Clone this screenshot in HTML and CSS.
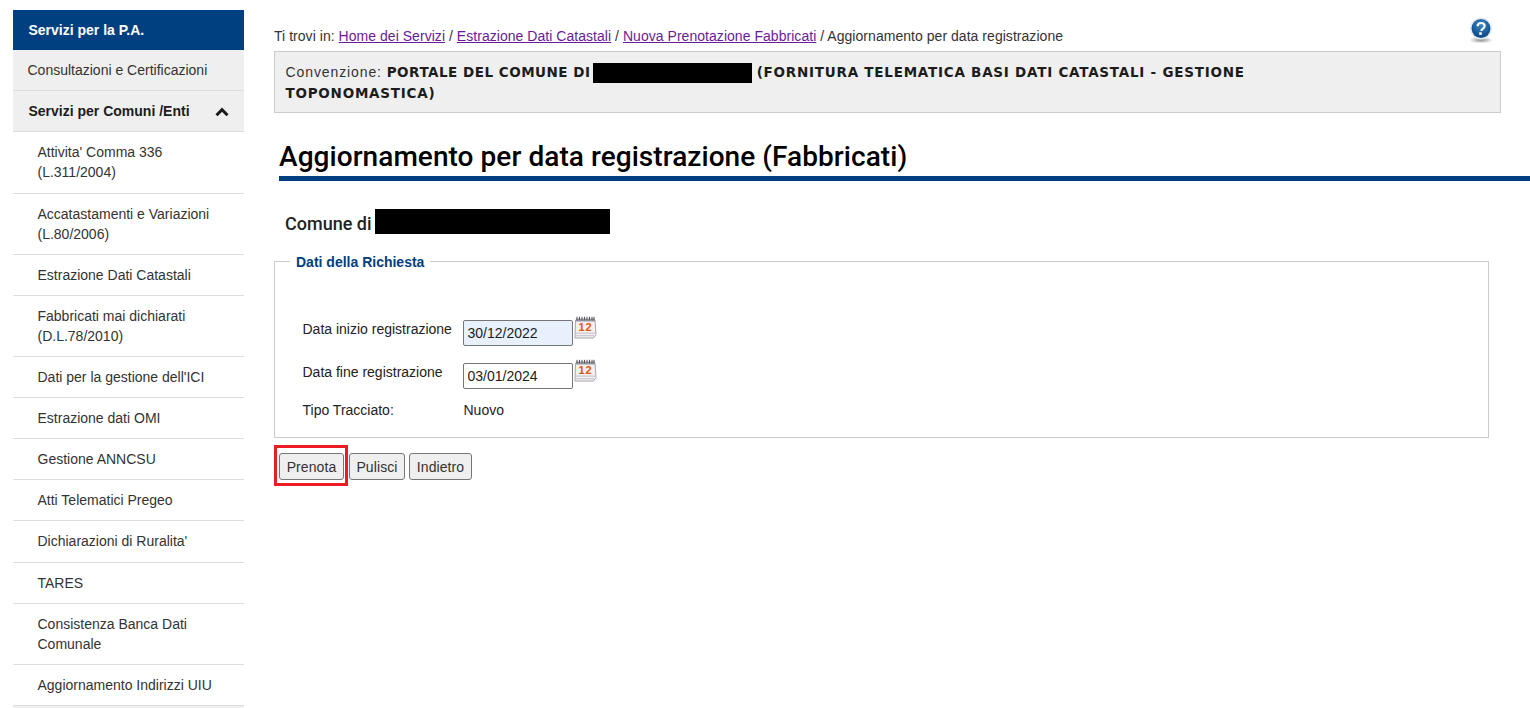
FILE: index.html
```html
<!DOCTYPE html>
<html lang="it">
<head>
<meta charset="utf-8">
<title>Aggiornamento per data registrazione</title>
<link rel="stylesheet" href="styles.css">
</head>
<body>
<div class="page">
  <nav class="sidebar">
    <div class="side-head">Servizi per la P.A.</div>
    <a class="side-top">Consultazioni e Certificazioni</a>
    <div class="side-group"><span>Servizi per Comuni /Enti</span>
      <svg class="chev" width="14" height="10" viewBox="0 0 14 10"><path d="M1.5 8.2 7 2.6l5.5 5.6" fill="none" stroke="#1c1c1c" stroke-width="3"/></svg>
    </div>
    <ul class="side-list">
      <li>Attivita' Comma 336 (L.311/2004)</li>
      <li>Accatastamenti e Variazioni (L.80/2006)</li>
      <li>Estrazione Dati Catastali</li>
      <li>Fabbricati mai dichiarati (D.L.78/2010)</li>
      <li>Dati per la gestione dell'ICI</li>
      <li>Estrazione dati OMI</li>
      <li>Gestione ANNCSU</li>
      <li>Atti Telematici Pregeo</li>
      <li>Dichiarazioni di Ruralita'</li>
      <li>TARES</li>
      <li>Consistenza Banca Dati Comunale</li>
      <li>Aggiornamento Indirizzi UIU</li>
    </ul>
    <div class="side-foot"></div>
  </nav>
  <main class="content">
    <div class="crumb-row">
      <p class="crumbs">Ti trovi in: <a href="#">Home dei Servizi</a> / <a href="#">Estrazione Dati Catastali</a> / <a href="#">Nuova Prenotazione Fabbricati</a> / Aggiornamento per data registrazione</p>
      <svg class="help" width="26" height="28" viewBox="0 0 26 28">
        <defs>
          <radialGradient id="hb" cx="50%" cy="30%" r="70%"><stop offset="0" stop-color="#3a86c6"/><stop offset="1" stop-color="#0b4685"/></radialGradient>
          <radialGradient id="hs" cx="50%" cy="50%" r="50%"><stop offset="0" stop-color="#8f8f8f"/><stop offset="1" stop-color="#fff"/></radialGradient>
        </defs>
        <ellipse cx="13" cy="24" rx="12" ry="3.5" fill="url(#hs)"/>
        <circle cx="13" cy="12.5" r="11" fill="#dfe9f2"/>
        <circle cx="13" cy="12.5" r="9.4" fill="url(#hb)"/>
        <path d="M9.6 10.2c0-2 1.5-3.2 3.5-3.2s3.5 1.2 3.5 3c0 1.500-.9 2.200-1.900 2.900-.9.6-1.300 1.100-1.300 2.100" fill="none" stroke="#fff" stroke-width="2.200"/>
        <rect x="11.200" y="16.300" width="2.600" height="2.500" fill="#fff"/>
      </svg>
    </div>
    <div class="convention">
      <span class="conv-label">Convenzione:</span>
      <strong>PORTALE DEL COMUNE DI<span class="redact redact-a"></span> <span class="conv-rest">(FORNITURA TELEMATICA BASI DATI CATASTALI - GESTIONE TOPONOMASTICA)</span></strong>
    </div>
    <h1 class="title">Aggiornamento per data registrazione (Fabbricati)</h1>
    <h2 class="comune"><span class="comune-text">Comune di</span><span class="redact redact-b"></span></h2>
    <fieldset class="request">
      <legend>Dati della Richiesta</legend>
      <div class="form-grid">
        <label class="lab" for="d1">Data inizio registrazione</label>
        <div class="field field-first">
          <input id="d1" class="date filled" type="text" value="30/12/2022">
          <svg class="cal" width="24" height="24" viewBox="0 0 24 24">
            <path d="M2.500 4h19.500L23 18.500 20.500 22H2Z" fill="#f3f0ee" stroke="#a8a5b0"/>
            <path d="M3 16.500h19v1.300H3zM3 19h18v1.300H3z" fill="#cdc9d6"/>
            <path d="M3 2.500h18.500l.5 3H3Z" fill="#9a9aa2"/>
            <path d="M4 .8v3.500M6.500.8v3.500M9 .8v3.500M11.500.8v3.500M14 .8v3.500M16.500.8v3.500M19 .8v3.500M21 .8v3.500" stroke="#55565c"/>
            <text x="12.500" y="15" class="cal-num">12</text>
          </svg>
        </div>
        <label class="lab" for="d2">Data fine registrazione</label>
        <div class="field">
          <input id="d2" class="date" type="text" value="03/01/2024">
          <svg class="cal" width="24" height="24" viewBox="0 0 24 24">
            <path d="M2.500 4h19.500L23 18.500 20.500 22H2Z" fill="#f3f0ee" stroke="#a8a5b0"/>
            <path d="M3 16.500h19v1.300H3zM3 19h18v1.300H3z" fill="#cdc9d6"/>
            <path d="M3 2.500h18.500l.5 3H3Z" fill="#9a9aa2"/>
            <path d="M4 .8v3.500M6.500.8v3.500M9 .8v3.500M11.500.8v3.500M14 .8v3.500M16.500.8v3.500M19 .8v3.500M21 .8v3.500" stroke="#55565c"/>
            <text x="12.500" y="15" class="cal-num">12</text>
          </svg>
        </div>
        <span class="lab plain">Tipo Tracciato:</span>
        <span class="plain value">Nuovo</span>
      </div>
    </fieldset>
    <div class="actions">
      <span class="highlight"><button class="btn btn-prenota" type="button">Prenota</button></span>
      <button class="btn btn-pulisci" type="button">Pulisci</button>
      <button class="btn btn-indietro" type="button">Indietro</button>
    </div>
  </main>
</div>
</body>
</html>
```
FILE: styles.css
```css
html, body { margin: 0; padding: 0; height: 708px; overflow: hidden; background: #fff; }
body { font-family: "Liberation Sans", Arial, sans-serif; font-size: 14px; color: #1c1c1c; }
.page { display: flex; align-items: flex-start; padding: 10px 0 0 13px; }
.sidebar { width: 231px; flex: none; }
.side-head { height: 40px; line-height: 40px; background: #004080; color: #fff; font-weight: 700; padding-left: 15.5px; }
.side-top { display: block; height: 40px; line-height: 40px; background: #efefef; border-bottom: 1px solid #ddd; padding-left: 14.5px; color: #333; }
.side-group { display: flex; justify-content: space-between; align-items: center; height: 40px; background: #efefef; border-bottom: 1px solid #ddd; padding: 0 15px 0 15.5px; font-weight: 700; }
.chev { margin-top: 2px; }
.side-list { list-style: none; margin: 0; padding: 0.4px 0 0; }
.side-list li { padding: 10.07px 25px 10.07px 24.5px; line-height: 20px; border-bottom: 1px solid #ddd; color: #333; }
.side-foot { height: 3px; background: #efefef; }
.content { flex: 1; min-width: 0; margin-left: 30px; }
.crumb-row { display: flex; align-items: flex-start; justify-content: space-between; height: 41px; }
.crumbs { margin: 0; padding-top: 18px; line-height: 16px; color: #333; letter-spacing: 0.04px; }
.crumbs a { color: #6a1b9a; }
.help { margin: 6px 36px 0 0; }
.convention { box-sizing: border-box; width: 1227px; height: 62px; padding: 10px 200px 8px 10.5px; background: #efefef; border: 1px solid #ccc; line-height: 20px; font-size: 14px; letter-spacing: 0.9px; color: #333; }
.convention strong { font-family: "DejaVu Sans", Verdana, sans-serif; font-size: 13.5px; letter-spacing: 0.5px; color: #1c1c1c; }
.conv-rest { letter-spacing: 0.76px; }
.redact { display: inline-block; background: #000; vertical-align: middle; }
.redact-a { width: 159px; height: 20px; margin: 0 -1px 0 3px; }
.redact-b { width: 235px; height: 25px; margin-left: 3px; }
.title { margin: 26px 0 0 5px; padding-bottom: 1px; border-bottom: 5px solid #004080; font-family: Roboto, sans-serif; font-size: 28px; line-height: 36px; font-weight: 500; letter-spacing: 0.06px; color: #000; white-space: nowrap; }
.comune { display: flex; margin: 28px 0 0 11px; height: 25px; font-family: Roboto, sans-serif; font-size: 18px; line-height: 25px; font-weight: 500; color: #222; }
.comune-text { padding-top: 2px; }
.request { width: 1215px; box-sizing: border-box; height: 186px; margin: 18px 0 0; padding: 0; border: 1px solid #ccc; }
.request legend { margin-left: 15px; padding: 2px 6px 0; font-weight: 700; color: #004080; line-height: 16px; }
.form-grid { display: grid; grid-template-columns: 160px auto; justify-content: start; padding: 49px 0 0 27.5px; row-gap: 11px; align-items: start; }
.lab { padding-top: 2px; color: #222; }
.field { display: flex; align-items: flex-start; }
.field-first { padding-bottom: 5px; }
.date { box-sizing: border-box; width: 110px; height: 26px; margin-top: 1px; padding: 1px 4px; border: 1px solid #767676; border-radius: 2px; background: #fff; font: 14px "Liberation Sans", Arial, sans-serif; color: #1c1c1c; }
.date.filled { background: #e8f0fe; }
.cal { margin-top: -3px; }
.cal-num { font: 700 11px "Liberation Sans", Arial, sans-serif; letter-spacing: 1px; fill: #e2570f; text-anchor: middle; }
.plain { margin-top: 2px; color: #222; }
.lab.plain { padding-top: 0; }
.value { padding-left: 1px; }
.actions { display: flex; align-items: center; gap: 4px; margin-top: 15px; padding-left: 5px; }
.highlight { display: flex; position: relative; margin-right: 1px; }
.highlight::after { content: ""; position: absolute; inset: -8px -4px -6px -5px; border: 3px solid #ed1c24; }
.btn { box-sizing: border-box; height: 27px; padding: 0; border: 1px solid #767676; border-radius: 3px; background: #efefef; font: 14px "Liberation Sans", Arial, sans-serif; letter-spacing: 0.1px; color: #333; }
.btn-prenota { width: 65px; }
.btn-pulisci { width: 56px; }
.btn-indietro { width: 63px; }
```
